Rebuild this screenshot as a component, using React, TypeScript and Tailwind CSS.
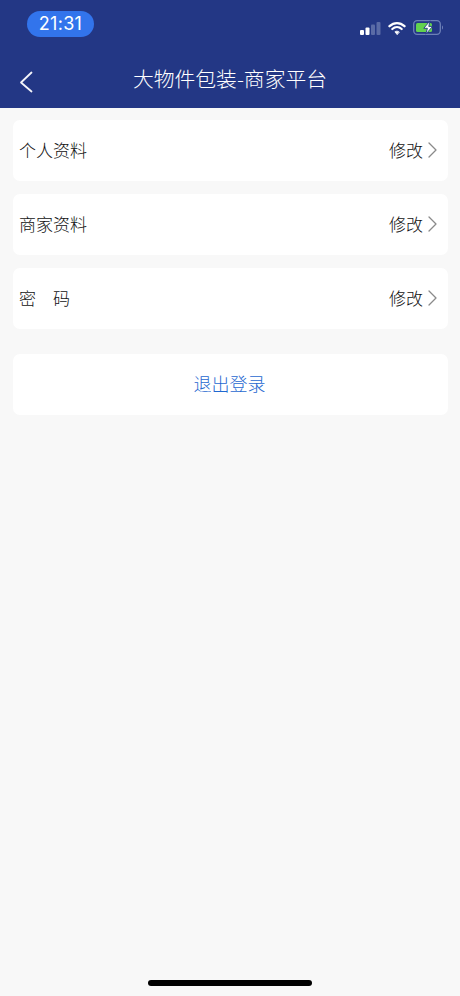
export default function App() {
  const rows = [
    { label: "个人资料" },
    { label: "商家资料" },
    { label: "密　码" },
  ];
  return (
    <div className="w-[460px] h-[996px] bg-[#f8f8f8] flex flex-col overflow-hidden font-['Noto_Sans_CJK_SC','Noto_Sans',sans-serif]">
      <header className="h-[108px] bg-[#233785] flex flex-col shrink-0">
        <div className="h-[50px] flex items-start justify-between pl-[27px] pr-[17px] pt-[11px]">
          <div className="w-[67px] h-[26px] rounded-full bg-[#3274ec] text-white text-[18px] leading-[26px] text-center font-['Inter',sans-serif] tracking-[0.3px]">21:31</div>
          <div className="flex items-center gap-[7px] pt-[9px]">
            <svg width="21" height="14" viewBox="0 0 21 14">
              <rect x="0" y="9" width="4" height="5" rx="1" fill="#fff" />
              <rect x="5.5" y="6.5" width="4" height="7.5" rx="1" fill="#fff" />
              <rect x="11" y="3.5" width="4" height="10.5" rx="1" fill="#5a6ba6" />
              <rect x="16.5" y="1" width="4" height="13" rx="1" fill="#5a6ba6" />
            </svg>
            <svg width="18" height="14" viewBox="0 0 18 14" fill="none" stroke="#fff" strokeLinecap="round">
              <path d="M1.5 5.2C6 1 12 1 16.5 5.2" strokeWidth="2.3" />
              <path d="M4.3 8C7 5.6 11 5.6 13.7 8" strokeWidth="2.2" />
              <path d="M9 13.4 6.9 10.8C8 9.9 10 9.9 11.1 10.8Z" fill="#fff" stroke="#fff" strokeWidth="0.8" strokeLinejoin="round" />
            </svg>
            <svg width="30" height="15" viewBox="0 0 30 15" fill="none">
              <rect x="0.7" y="0.7" width="26.6" height="13.6" rx="3.5" stroke="#6d80b8" strokeWidth="1.3" />
              <rect x="3" y="3" width="16" height="9" rx="1.5" fill="#62d24f" />
              <path d="M29 5.5c.7.3 1 1.1 1 2s-.3 1.7-1 2Z" fill="#6d80b8" />
              <path d="M17 .8 10.800 8.300h3.600L12.800 14.200 19.600 6.400h-3.800Z" fill="#fff" stroke="#233785" strokeWidth="0.9" />
            </svg>
          </div>
        </div>
        <div className="relative h-[58px] flex items-center justify-center pb-[2px]">
          <svg className="absolute left-[19px] top-[21px]" width="14" height="22" viewBox="0 0 14 22" fill="none" stroke="#f4f5fa" strokeWidth="1.8" strokeLinecap="round" strokeLinejoin="round">
            <path d="M12.5 1.500 2 11.500 12.500 20.500" />
          </svg>
          <span className="text-white text-[20.8px] leading-[30px] font-light">大物件包装-商家平台</span>
        </div>
      </header>
      <main className="flex flex-col gap-[13px] pl-[13px] pr-[12px] pt-[12px]">
        {rows.map((r) => (
          <div key={r.label} className="h-[61px] bg-white rounded-[7px] flex items-center justify-between pl-[6px] pr-[11px]">
            <span className="text-[#111111] text-[17px] leading-[26px] font-light -translate-y-[1px]">{r.label}</span>
            <div className="flex items-center gap-[5px]">
              <span className="text-[#111111] text-[17px] leading-[26px] font-light -translate-y-[1px]">修改</span>
              <svg className="-translate-y-[1px]" width="9" height="16" viewBox="0 0 9 16" fill="none" stroke="#8a8a8a" strokeWidth="1.3" strokeLinecap="round" strokeLinejoin="round">
                <path d="M1 1l7 7-7 7" />
              </svg>
            </div>
          </div>
        ))}
        <div className="mt-[12px] h-[61px] bg-white rounded-[7px] flex items-center justify-center">
          <span className="text-[#1f68d0] text-[18px] leading-[26px] font-light -translate-x-[1px] -translate-y-[2px]">退出登录</span>
        </div>
      </main>
      <div className="mt-auto mb-[10px] mx-auto w-[164px] h-[6px] rounded-full bg-black" />
    </div>
  );
}
